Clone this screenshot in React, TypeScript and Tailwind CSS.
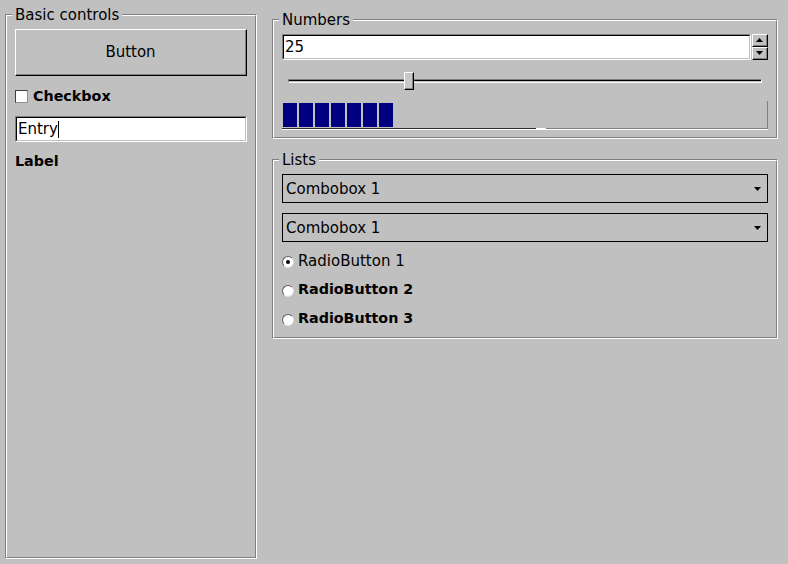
import { ReactNode } from "react";

const font = "font-['DejaVu_Sans',sans-serif]";

function GroupBox({ title, className, children }: { title: string; className?: string; children: ReactNode }) {
  return (
    <div className={`relative border border-t-[#808080] border-l-[#808080] border-r-white border-b-white ${className ?? ""}`}>
      <span className="absolute left-[6px] top-[-9px] px-[3px] bg-[#c0c0c0] text-[15px] leading-[18px] text-black">
        {title}
      </span>
      <div className="h-full border border-t-white border-l-white border-r-[#808080] border-b-[#808080]">
        {children}
      </div>
    </div>
  );
}

function SunkenEntry({ text, caret, className }: { text: string; caret?: boolean; className?: string }) {
  return (
    <div className={`h-[26px] border border-t-[#808080] border-l-[#808080] border-r-white border-b-white ${className ?? ""}`}>
      <div className="h-full border border-t-black border-l-black border-r-[#c0c0c0] border-b-[#c0c0c0] bg-white pl-[1px] flex items-start">
        <span className="text-[15px] leading-[23px]">{text}</span>
        {caret && <span className="mt-[3px] w-[1px] h-[17px] bg-black" />}
      </div>
    </div>
  );
}

function SpinButton({ up }: { up?: boolean }) {
  return (
    <div className="h-[13px] w-[16px] border border-t-white border-l-white border-r-black border-b-black">
      <div className="h-full w-full border-r border-b border-[#808080] flex items-center justify-center">
        <svg width="7" height="4" viewBox="0 0 7 4">
          <polygon points={up ? "3.5,0 7,4 0,4" : "0,0 7,0 3.5,4"} fill="black" />
        </svg>
      </div>
    </div>
  );
}

function Combo({ text, className }: { text: string; className?: string }) {
  return (
    <div className={`h-[29px] border border-black flex items-center pl-[3px] pr-[6px] ${className ?? ""}`}>
      <span className="flex-1 text-[15px] leading-[18px]">{text}</span>
      <svg width="7" height="4" viewBox="0 0 7 4">
        <polygon points="0,0 7,0 3.5,4" fill="black" />
      </svg>
    </div>
  );
}

function Radio({ label, checked, bold }: { label: string; checked?: boolean; bold?: boolean }) {
  return (
    <div className="h-[29px] flex items-center">
      <div className="w-[12px] h-[12px] rounded-full bg-white border border-t-[#606060] border-l-[#606060] border-r-[#e0e0e0] border-b-[#e0e0e0] flex items-center justify-center">
        {checked && <div className="w-[4px] h-[4px] rounded-full bg-black" />}
      </div>
      <span className={bold ? "ml-[4px] -mt-[2px] text-[14.3px] font-bold" : "ml-[4px] text-[15px]"}>{label}</span>
    </div>
  );
}

export default function App() {
  const value = 25;
  const troughW = 473;
  const thumbLeft = Math.round((value / 100) * (troughW - 10));

  return (
    <div className={`${font} w-[788px] h-[564px] bg-[#c0c0c0] text-black flex gap-[15px] pl-[5px] pt-[14px]`}>
      <GroupBox title="Basic controls" className="w-[252px] h-[545px]">
        <div className="px-[8px] pt-[13px] flex flex-col">
          <div className="h-[47px] border border-t-white border-l-white border-r-black border-b-black">
            <div className="h-full border-r border-b border-[#808080] flex items-center justify-center">
              <span className="text-[15px] leading-[18px]">Button</span>
            </div>
          </div>

          <div className="mt-[10px] h-[20px] flex items-center">
            <div className="w-[13px] h-[13px] bg-white border border-t-[#404040] border-l-[#404040] border-r-[#909090] border-b-[#909090]" />
            <span className="ml-[5px] text-[14.3px] font-bold leading-[20px]">Checkbox</span>
          </div>

          <SunkenEntry text="Entry" caret className="mt-[10px]" />

          <div className="mt-[9px] h-[20px] text-[14.3px] font-bold leading-[20px]">Label</div>
        </div>
      </GroupBox>

      <div className="w-[506px] flex flex-col gap-[20px] pt-[5px]">
        <GroupBox title="Numbers">
          <div className="px-[8px] pt-[13px] pb-[7px] flex flex-col">
            <div className="flex gap-[1px]">
              <SunkenEntry text="25" className="flex-1" />
              <div className="flex flex-col">
                <SpinButton up />
                <SpinButton />
              </div>
            </div>

            <div className="mt-[12px] h-[18px] px-[6px] flex items-center">
              <div className="relative w-full h-[4px]">
                <div className="h-full border border-t-[#808080] border-l-[#808080] border-r-white border-b-white">
                  <div className="h-[1px] bg-black" />
                </div>
                <div
                  className="absolute top-[-7px] w-[10px] h-[18px] bg-[#c8c8c8] border border-t-white border-l-white border-r-black border-b-black"
                  style={{ left: thumbLeft }}
                >
                  <div className="h-full w-full border-r border-b border-[#808080]" />
                </div>
              </div>
            </div>

            <div className="mt-[11px] border-b border-white">
              <div className="h-[28px] border-r border-[#808080] flex flex-col">
                <div className="flex gap-[2px] pt-[2px] pl-[1px]">
                  {Array.from({ length: 7 }).map((_, i) => (
                    <div key={i} className="w-[14px] h-[24px] bg-[#000080]" />
                  ))}
                </div>
                <div className="mt-auto h-[1px] flex">
                  <div className="w-[254px] bg-[#303030]" />
                  <div className="w-[10px] bg-white" />
                  <div className="flex-1 bg-[#808080]" />
                </div>
              </div>
            </div>
          </div>
        </GroupBox>

        <GroupBox title="Lists">
          <div className="px-[8px] pt-[13px] pb-[3px] flex flex-col">
            <Combo text="Combobox 1" />
            <Combo text="Combobox 1" className="mt-[10px]" />
            <div className="mt-[5px] flex flex-col">
              <Radio label="RadioButton 1" checked />
              <Radio label="RadioButton 2" bold />
              <Radio label="RadioButton 3" bold />
            </div>
          </div>
        </GroupBox>
      </div>
    </div>
  );
}
